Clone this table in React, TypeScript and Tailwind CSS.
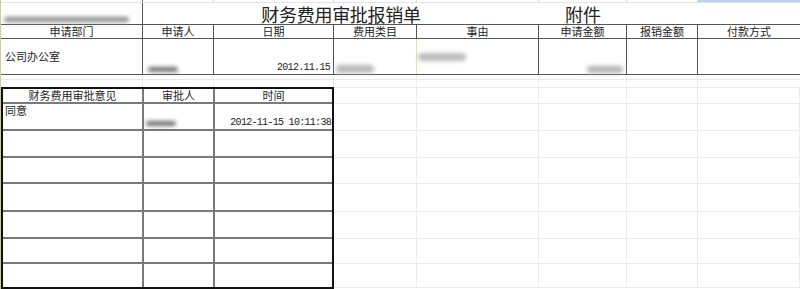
import React from "react";

const Blur = ({ className }: { className: string }) => (
  <div className={"rounded-full blur-[2px] " + className} />
);

export default function App() {
  const rightRows = [
    "h-[17px] border-t",
    "h-[27px]",
    "h-[27px]",
    "h-[26px]",
    "h-[28px]",
    "h-[27px]",
    "h-[25px]",
    "h-[24px]",
  ];
  return (
    <div className="w-[800px] h-[289px] overflow-hidden bg-white border-l border-[#cfcb98] text-[#1c1c1c] font-['Noto_Sans_CJK_SC','Noto_Sans',sans-serif]">
      {/* row 0 */}
      <div className="flex h-[3px] border-b border-[#e4e4e4]">
        <div className="w-[142px] border-r border-[#666]" />
        <div className="w-[71px] border-r border-[#e2dfb5]" />
        <div className="w-[120px] border-r border-[#e2dfb5]" />
        <div className="w-[83px] border-r border-[#e2dfb5]" />
        <div className="w-[122px] border-r border-[#e2dfb5]" />
        <div className="w-[88px] border-r border-[#e2dfb5]" />
        <div className="w-[71px] border-r border-[#e2dfb5]" />
        <div className="w-[102px] bg-[#b9d2f0]" />
      </div>
      {/* title row */}
      <div className="flex h-[22px] border-b border-[#555]">
        <div className="w-[142px] border-r border-[#555] flex items-end pb-[2px] pl-[3px]">
          <Blur className="w-[125px] h-[5px] bg-[#8a8a8a]" />
        </div>
        <div className="w-[396px] flex items-center justify-center text-[18px] leading-[18px] tracking-[-0.3px] text-[#222]">
          财务费用审批报销单
        </div>
        <div className="w-[88px] flex items-center justify-center text-[18px] leading-[18px] text-[#222]">
          附件
        </div>
        <div className="flex-1" />
      </div>
      {/* header row */}
      <div className="flex h-[14px] border-b border-[#555] text-[11px] leading-none">
        <div className="w-[142px] border-r border-[#555] flex items-center justify-center">申请部门</div>
        <div className="w-[71px] border-r border-[#555] flex items-center justify-center">申请人</div>
        <div className="w-[120px] border-r border-[#555] flex items-center justify-center">日期</div>
        <div className="w-[83px] border-r border-[#555] flex items-center justify-center">费用类目</div>
        <div className="w-[122px] border-r border-[#555] flex items-center justify-center">事由</div>
        <div className="w-[88px] border-r border-[#555] flex items-center justify-center">申请金额</div>
        <div className="w-[71px] border-r border-[#555] flex items-center justify-center">报销金额</div>
        <div className="flex-1 flex items-center justify-center">付款方式</div>
      </div>
      {/* data row */}
      <div className="flex h-[36px] border-b border-[#555] text-[11px] leading-none">
        <div className="w-[142px] border-r border-[#555] flex items-center pl-[4px]">公司办公室</div>
        <div className="w-[71px] border-r border-[#555] flex items-end pb-[2px] pl-[5px]">
          <Blur className="w-[30px] h-[5px] bg-[#6f6f6f]" />
        </div>
        <div className="w-[120px] border-r border-[#555] flex items-end justify-end pr-[3px] pb-[1px] font-['Liberation_Mono',monospace] text-[10px] tracking-[-0.7px]">
          2012.11.15
        </div>
        <div className="w-[83px] border-r border-[#e2dfb5] flex items-end pb-[1px] pl-[2px]">
          <Blur className="w-[38px] h-[8px] bg-[#b8b8b8]" />
        </div>
        <div className="w-[122px] border-r border-[#555] flex flex-col justify-center pl-[1px] gap-[1px]">
          <Blur className="w-[48px] h-[8px] bg-[#bcbcbc]" />
        </div>
        <div className="w-[88px] border-r border-[#555] flex items-end justify-end pr-[3px] pb-[1px]">
          <Blur className="w-[36px] h-[7px] bg-[#b4b4b4]" />
        </div>
        <div className="w-[71px] border-r border-[#555]" />
        <div className="flex-1" />
      </div>
      {/* gap rows */}
      <div className="flex h-[5px] border-b border-[#e8e8e8]">
        <div className="w-[142px] border-r border-[#ececec]" />
        <div className="w-[71px] border-r border-[#ececec]" />
        <div className="w-[120px] border-r border-[#ececec]" />
        <div className="w-[83px] border-r border-[#ececec]" />
        <div className="w-[122px] border-r border-[#ececec]" />
        <div className="w-[88px] border-r border-[#ececec]" />
        <div className="w-[71px] border-r border-[#ececec]" />
        <div className="flex-1" />
      </div>
      <div className="flex h-[7px]">
        <div className="w-[142px] border-r border-[#ececec]" />
        <div className="w-[71px] border-r border-[#ececec]" />
        <div className="w-[120px] border-r border-[#ececec]" />
        <div className="w-[83px] border-r border-[#ececec]" />
        <div className="w-[122px] border-r border-[#ececec]" />
        <div className="w-[88px] border-r border-[#ececec]" />
        <div className="w-[71px] border-r border-[#ececec]" />
        <div className="flex-1" />
      </div>
      {/* lower section */}
      <div className="flex">
        <div className="w-[333px] border-2 border-[#111] flex flex-col text-[11px] leading-none">
          <div className="flex h-[15px] border-b-2 border-[#7a7a7a]">
            <div className="w-[141px] border-r-2 border-[#7a7a7a] flex items-center justify-center">财务费用审批意见</div>
            <div className="w-[71px] border-r-2 border-[#7a7a7a] flex items-center justify-center">审批人</div>
            <div className="flex-1 flex items-center justify-center">时间</div>
          </div>
          <div className="flex h-[27px] border-b-2 border-[#7a7a7a]">
            <div className="w-[141px] border-r-2 border-[#7a7a7a] pl-[2px] pt-[1px]">同意</div>
            <div className="w-[71px] border-r-2 border-[#7a7a7a] flex items-end pb-[3px] pl-[2px]">
              <Blur className="w-[30px] h-[5px] bg-[#6f6f6f]" />
            </div>
            <div className="flex-1 flex items-end justify-end pr-[1px] pb-[1px] font-['Liberation_Mono',monospace] text-[10px] tracking-[-0.7px]">
              2012-11-15 10:11:38
            </div>
          </div>
          {["h-[27px] border-b-2", "h-[26px] border-b-2", "h-[28px] border-b-2", "h-[27px] border-b-2", "h-[25px] border-b-2", "h-[23px]"].map(
            (h, i) => (
              <div key={i} className={"flex border-[#7a7a7a] " + h}>
                <div className="w-[141px] border-r-2 border-[#7a7a7a]" />
                <div className="w-[71px] border-r-2 border-[#7a7a7a]" />
                <div className="flex-1" />
              </div>
            )
          )}
        </div>
        <div className="flex-1 flex flex-col">
          {rightRows.map((h, i) => (
            <div key={i} className={"flex border-b border-[#ebebeb] " + h}>
              <div className="w-[83px] border-r border-[#ebebeb]" />
              <div className="w-[122px] border-r border-[#ebebeb]" />
              <div className="w-[88px] border-r border-[#ebebeb]" />
              <div className="w-[71px] border-r border-[#ebebeb]" />
              <div className="flex-1 border-r border-[#ebebeb]" />
            </div>
          ))}
        </div>
      </div>
    </div>
  );
}
